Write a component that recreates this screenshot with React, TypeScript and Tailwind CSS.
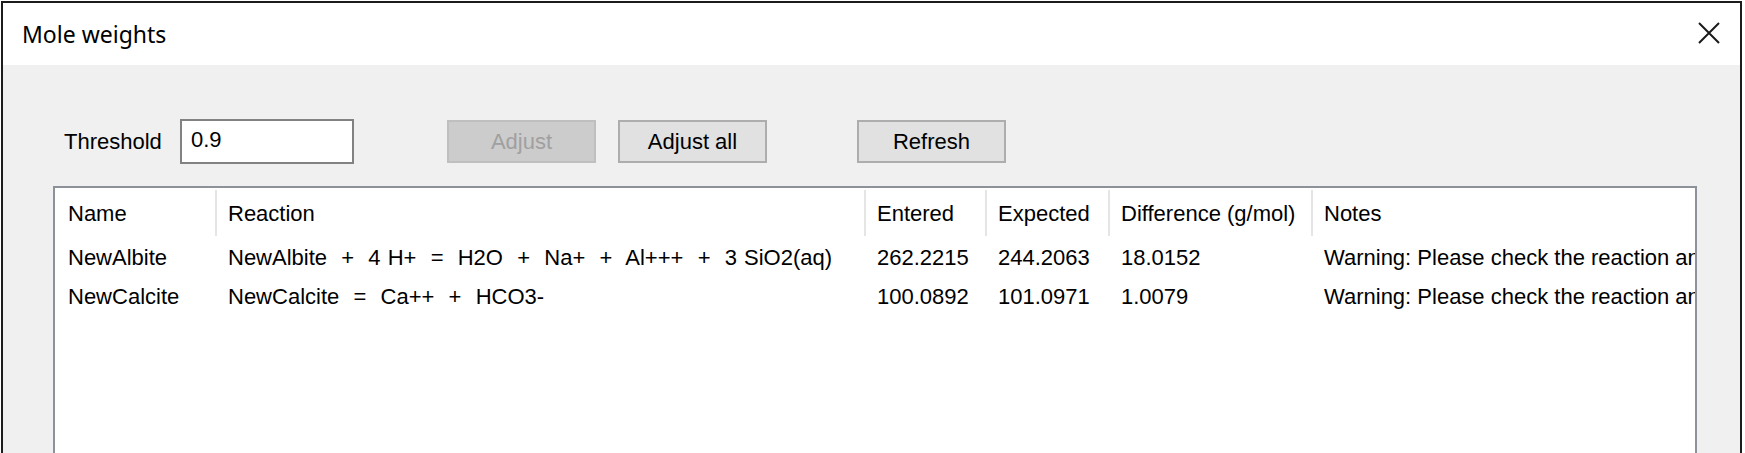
import React from "react";

const body = { fontFamily: '"Liberation Sans", Arial, sans-serif' };
const title = { fontFamily: '"Noto Sans", "Open Sans", sans-serif' };

const cols = "grid grid-cols-[160px_649px_121px_123px_203px_minmax(0,1fr)]";

function HeadCell({ children, sep = true }: { children: React.ReactNode; sep?: boolean }) {
  return (
    <div className="flex items-stretch h-full min-w-0">
      {sep ? <div className="w-[2px] my-[2px] bg-[#e5e5e5] shrink-0" /> : null}
      <div className={`flex items-center whitespace-nowrap ${sep ? "pl-[11px]" : "pl-[13px]"}`}>{children}</div>
    </div>
  );
}

function Cell({ children, wide = false }: { children: React.ReactNode; wide?: boolean }) {
  return (
    <div className={`flex items-center whitespace-pre min-w-0 pl-[13px] ${wide ? "[word-spacing:1px]" : ""}`}>
      {children}
    </div>
  );
}

const rows = [
  {
    name: "NewAlbite",
    reaction: "NewAlbite  +  4 H+  =  H2O  +  Na+  +  Al+++  +  3 SiO2(aq)",
    entered: "262.2215",
    expected: "244.2063",
    diff: "18.0152",
    notes: "Warning: Please check the reaction and the mole weight of the species",
  },
  {
    name: "NewCalcite",
    reaction: "NewCalcite  =  Ca++  +  HCO3-",
    entered: "100.0892",
    expected: "101.0971",
    diff: "1.0079",
    notes: "Warning: Please check the reaction and the mole weight of the species",
  },
];

export default function App() {
  return (
    <div className="w-[1745px] h-[453px] overflow-hidden bg-white">
      <div className="ml-[1px] mt-[1px] w-[1741px] h-[480px] border-2 border-[#1c1c1c] flex flex-col">
        <div className="h-[62px] shrink-0 bg-white flex items-center justify-between pl-[19px] pr-[20px]">
          <span className="text-[23px] text-black" style={title}>
            Mole weights
          </span>
          <svg width="22" height="22" viewBox="0 0 22 22" className="mt-[-3px]">
            <path d="M1 1 L21 21 M21 1 L1 21" stroke="#1a1a1a" strokeWidth="2" fill="none" />
          </svg>
        </div>
        <div className="flex-1 bg-[#f0f0f0] flex flex-col text-[22px] text-black" style={body}>
          <div className="flex items-center pl-[61px] pt-[54px]">
            <div className="w-[116px]">Threshold</div>
            <div className="w-[174px] h-[45px] bg-white border-2 border-[#828282] pl-[9px] pt-[6px] leading-[26px]">
              0.9
            </div>
            <button className="ml-[93px] w-[149px] h-[43px] bg-[#cccccc] border-2 border-[#bfbfbf] text-[#a0a0a0]">
              Adjust
            </button>
            <button className="ml-[22px] w-[149px] h-[43px] bg-[#e1e1e1] border-2 border-[#adadad]">
              Adjust all
            </button>
            <button className="ml-[90px] w-[149px] h-[43px] bg-[#e1e1e1] border-2 border-[#adadad]">
              Refresh
            </button>
          </div>
          <div className="ml-[50px] mt-[22px] w-[1644px] flex-1 bg-white border-2 border-[#8d9199] overflow-hidden">
            <div className={`${cols} h-[50px]`}>
              <HeadCell sep={false}>Name</HeadCell>
              <HeadCell>Reaction</HeadCell>
              <HeadCell>Entered</HeadCell>
              <HeadCell>Expected</HeadCell>
              <HeadCell>Difference (g/mol)</HeadCell>
              <HeadCell>Notes</HeadCell>
            </div>
            {rows.map((r) => (
              <div key={r.name} className={`${cols} h-[39px]`}>
                <Cell>{r.name}</Cell>
                <Cell wide>{r.reaction}</Cell>
                <Cell>{r.entered}</Cell>
                <Cell>{r.expected}</Cell>
                <Cell>{r.diff}</Cell>
                <Cell>{r.notes}</Cell>
              </div>
            ))}
          </div>
        </div>
      </div>
    </div>
  );
}
